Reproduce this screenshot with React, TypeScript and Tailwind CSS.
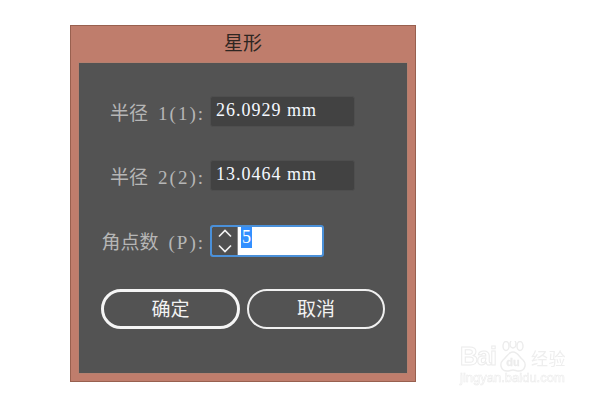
const FONT = "font-['Liberation_Serif','Noto_Sans_CJK_SC',serif]";

function Label({ cjk, latin }: { cjk: string; latin: string }) {
  return (
    <span className="w-[131px] pr-[5px] pt-[5px] flex justify-end items-baseline text-[19px] text-[#b6b6b6] whitespace-nowrap">
      <span className="mr-[10px]">{cjk}</span>
      <span className="tracking-[2px]">{latin}</span>
    </span>
  );
}

function Field({ cjk, latin, value }: { cjk: string; latin: string; value: string }) {
  return (
    <div className="flex items-center h-[31px]">
      <Label cjk={cjk} latin={latin} />
      <div className="w-[145px] h-[31px] pl-[5px] pb-[2px] flex items-center rounded-[3px] bg-[#424242] border border-[#4e4e4e] text-[#f4f8ff] text-[18px] whitespace-pre tracking-[1px]">
        {value}
      </div>
    </div>
  );
}

function Watermark() {
  return (
    <div className="absolute left-[460px] top-[339px] w-[110px] text-white blur-[0.4px] [-webkit-text-stroke:1px_#ececec] select-none">
      <div className="flex items-end h-[32px] font-['Liberation_Sans','Noto_Sans_CJK_SC',sans-serif] font-bold text-[25px] leading-[30px]">
        <span className="w-[37px] tracking-[-1px]">Bai</span>
        <svg width="32" height="34" viewBox="0 0 32 34" className="shrink-0 -mb-[4px]" fill="none" stroke="#ececec">
          <ellipse cx="9" cy="5" rx="3" ry="4.5" strokeWidth="1.4" />
          <ellipse cx="16" cy="3" rx="3" ry="4" strokeWidth="1.4" />
          <ellipse cx="23" cy="5" rx="3" ry="4.5" strokeWidth="1.4" />
          <path d="M16 11c-5 0-6 5-10 8-4 4-2 11 4 11 2.500 0 4-1 6-1s3.500 1 6 1c6 0 8-7 4-11-4-3-5-8-10-8z" strokeWidth="1.4" />
          <text x="16" y="25" textAnchor="middle" fontSize="11" strokeWidth="0.3" fill="#ececec">du</text>
        </svg>
        <span className="ml-[2px] font-normal text-[17px] leading-[22px] tracking-[0.5px] text-[#eeeeee] [-webkit-text-stroke:0px_#ececec] whitespace-nowrap">经验</span>
      </div>
      <div className="-mt-[1px] font-['Liberation_Sans',sans-serif] text-[13px] leading-[16px] whitespace-nowrap [-webkit-text-stroke:0.6px_#ececec]">jingyan.baidu.com</div>
    </div>
  );
}

export default function App() {
  return (
    <div className={`relative w-[600px] h-[401px] bg-white overflow-hidden pt-[25px] pl-[70px] ${FONT}`}>
      <div className="w-[346px] h-[357px] flex flex-col border border-[#98604f] bg-[#bf7d6c] px-[7px] pb-[7px]">
        <div className="h-[36px] pb-[3px] flex items-center justify-center text-[19px] text-[#2e2622] font-['Noto_Sans_CJK_SC',sans-serif]">星形</div>
        <div className="flex-1 border border-[#b5806f] bg-[#535353] pt-[33px] flex flex-col">
          <Field cjk="半径" latin="1(1):" value="26.0929 mm" />
          <div className="h-[33px]" />
          <Field cjk="半径" latin="2(2):" value="13.0464 mm" />
          <div className="h-[34px]" />
          <div className="flex items-center h-[32px]">
            <Label cjk="角点数" latin="(P):" />
            <div className="w-[114px] h-[32px] flex rounded-[3px] border-2 border-[#4a90d9] overflow-hidden bg-white">
              <div className="w-[26px] flex flex-col items-center justify-center gap-[6px] bg-[#505050] border-r border-[#8a8a8a]">
                <svg width="16" height="9" viewBox="0 0 16 9" fill="none"><path d="M2 7.500 8 1.500l6 6" stroke="#f2f2f2" strokeWidth="1.7" /></svg>
                <svg width="16" height="9" viewBox="0 0 16 9" fill="none"><path d="M2 1.500 8 7.500l6-6" stroke="#f2f2f2" strokeWidth="1.7" /></svg>
              </div>
              <div className="flex-1 pl-[3px] flex items-start text-[18px]">
                <span className="bg-[#3390ff] text-white leading-[21px] px-[1px]">5</span>
              </div>
            </div>
          </div>
          <div className="mt-[32px] ml-[22px] flex gap-[7px]">
            <button className="w-[139px] h-[40px] pt-[3px] rounded-full border-[3px] border-[#f5f5f5] text-[19px] text-[#f2f2f2]">确定</button>
            <button className="w-[138px] h-[40px] pt-[3px] rounded-full border-2 border-[#f0f0f0] text-[19px] text-[#f2f2f2]">取消</button>
          </div>
        </div>
      </div>
      <Watermark />
    </div>
  );
}
